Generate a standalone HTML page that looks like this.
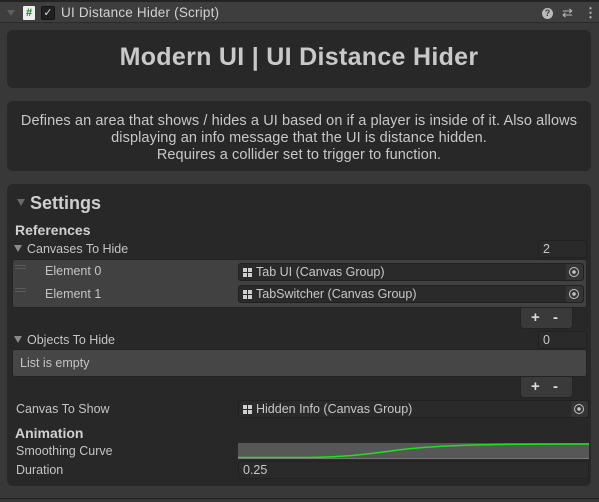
<!DOCTYPE html><html><head><style>
*{margin:0;padding:0;box-sizing:border-box}
body{width:599px;height:502px;background:#383838;font-family:"Liberation Sans",sans-serif;color:#c4c4c4;font-size:12px;position:relative;overflow:hidden}
.a{position:absolute;white-space:nowrap}
.box{position:absolute;background:#282828;border-radius:6px}
.fld{position:absolute;background:#2a2a2a;border:1px solid #212121;border-radius:3px;height:18px;font-size:12.5px;line-height:16px;padding-left:4px;color:#c8c8c8}
.ic{display:inline-block;width:9px;height:9px;margin-right:4px;vertical-align:-1px;background:
linear-gradient(#282828,#282828) 4px 0/1px 9px no-repeat,linear-gradient(#282828,#282828) 0 4px/9px 1px no-repeat,#cfcfcf}
.pk{position:absolute;right:0;top:0;width:17px;height:16px;background:#353535;border-radius:0 3px 3px 0}
.pk:after{content:"";position:absolute;left:3px;top:3px;width:8px;height:8px;border:1.3px solid #c4c4c4;border-radius:50%;background:radial-gradient(#c4c4c4 0 1.6px,transparent 2px)}
.tri{display:inline-block;width:0;height:0;border-left:4px solid transparent;border-right:4px solid transparent;border-top:7px solid #8a8a8a;margin-right:5px}
.pm{position:absolute;background:#3a3a3a;border-radius:0 0 4px 4px;width:53px;height:21px;border:1px solid #232323;border-top:none;color:#ddd;font-weight:bold;font-size:15px;line-height:19px}
</style></head><body>
<div class="a" style="left:0;top:0;width:599px;height:2px;background:#232323"></div>
<div class="a" style="left:0;top:2px;width:599px;height:21px;background:#3e3e3e;border-bottom:1px solid #2a2a2a"></div>
<div class="a" style="left:7px;top:10px;border-left:4px solid transparent;border-right:4px solid transparent;border-top:6px solid #5e5e5e"></div>
<div class="a" style="left:23px;top:6px;width:12px;height:14px;background:#eee;color:#1a7a1a;font-weight:bold;font-size:11px;line-height:14px;text-align:center;border-radius:1px">#</div>
<div class="a" style="left:41px;top:6px;width:14px;height:14px;background:#202020;border:1px solid #141414;border-radius:2px;color:#ddd;font-size:11px;line-height:12px;text-align:center">✓</div>
<div class="a" style="left:61px;top:5px;font-size:13.5px;color:#d2d2d2;letter-spacing:0.2px">UI Distance Hider (Script)</div>
<div class="a" style="left:542px;top:8px;width:11px;height:11px;border-radius:50%;background:#bbb;color:#3e3e3e;font-size:9px;font-weight:bold;line-height:11px;text-align:center">?</div>
<div class="a" style="left:562px;top:6px;color:#bbb;font-size:13px;line-height:13px">⇄</div>
<div class="a" style="left:584px;top:5px;color:#bbb;font-size:13px;font-weight:bold">⋮</div>

<div class="box" style="left:7px;top:30px;width:584px;height:58px"></div>
<div class="a" style="left:7px;top:43px;width:584px;text-align:center;font-size:25px;color:#c9c9c9;font-weight:bold;letter-spacing:0.3px">Modern UI | UI Distance Hider</div>

<div class="box" style="left:7px;top:101px;width:584px;height:70px"></div>
<div class="a" style="left:7px;top:113px;width:584px;text-align:center;font-size:14.5px;line-height:17px;color:#c8c8c8;white-space:normal;letter-spacing:0.1px">Defines an area that shows / hides a UI based on if a player is inside of it. Also allows<br>displaying an info message that the UI is distance hidden.<br>Requires a collider set to trigger to function.</div>

<div class="box" style="left:7px;top:184px;width:584px;height:302px"></div>
<div class="a" style="left:17px;top:193px;font-size:18px;font-weight:bold;color:#cfcfcf"><span class="tri" style="vertical-align:3px;border-top-color:#6a6a6a"></span>Settings</div>
<div class="a" style="left:15px;top:222px;font-size:14px;font-weight:bold;color:#d0d0d0">References</div>
<div class="a" style="left:14px;top:242px;font-size:12.5px"><span class="tri" style="vertical-align:1px"></span>Canvases To Hide</div>
<div class="fld" style="left:538px;top:240px;width:49px">2</div>
<div class="a" style="left:12px;top:259px;width:575px;height:49px;background:#414141;border:1px solid #232323;border-radius:3px"></div>
<div class="a" style="left:15px;top:265px;width:11px;height:4px;border-top:1px solid #5a5a5a;border-bottom:1px solid #5a5a5a"></div>
<div class="a" style="left:15px;top:288px;width:11px;height:4px;border-top:1px solid #5a5a5a;border-bottom:1px solid #5a5a5a"></div>
<div class="a" style="left:45px;top:264px;font-size:12.5px">Element 0</div>
<div class="a" style="left:45px;top:287px;font-size:12.5px">Element 1</div>
<div class="fld" style="left:238px;top:263px;width:346px"><span class="ic"></span>Tab UI (Canvas Group)<span class="pk"></span></div>
<div class="fld" style="left:238px;top:285px;width:346px"><span class="ic"></span>TabSwitcher (Canvas Group)<span class="pk"></span></div>
<div class="pm" style="left:520px;top:308px"><span class="a" style="left:10px;top:0">+</span><span class="a" style="left:32px;top:0">-</span></div>

<div class="a" style="left:14px;top:333px;font-size:12.5px"><span class="tri" style="vertical-align:1px"></span>Objects To Hide</div>
<div class="fld" style="left:538px;top:331px;width:49px">0</div>
<div class="a" style="left:12px;top:349px;width:575px;height:28px;background:#464646;border:1px solid #232323;border-radius:3px;padding:6px 0 0 7px;font-size:12.5px">List is empty</div>
<div class="pm" style="left:520px;top:377px"><span class="a" style="left:10px;top:0">+</span><span class="a" style="left:32px;top:0">-</span></div>

<div class="a" style="left:16px;top:402px;font-size:12.5px">Canvas To Show</div>
<div class="fld" style="left:238px;top:400px;width:351px"><span class="ic"></span>Hidden Info (Canvas Group)<span class="pk"></span></div>
<div class="a" style="left:15px;top:425px;font-size:14px;font-weight:bold;color:#d0d0d0">Animation</div>
<div class="a" style="left:16px;top:444px;font-size:12.5px">Smoothing Curve</div>
<svg class="a" style="left:238px;top:443px" width="351" height="16"><rect width="351" height="16" fill="#575757"/><path d="M0 14.5 L60 14.5 C110 14.5 130 11 160 7 C200 2 250 1 351 1" stroke="#1ee01e" stroke-width="1.5" fill="none"/><rect y="15" width="351" height="1" fill="#777"/></svg>
<div class="a" style="left:16px;top:463px;font-size:12.5px">Duration</div>
<div class="fld" style="left:238px;top:461px;width:351px">0.25</div>
<div class="a" style="left:0;top:498px;width:599px;height:1px;background:#222"></div>
</body></html>
